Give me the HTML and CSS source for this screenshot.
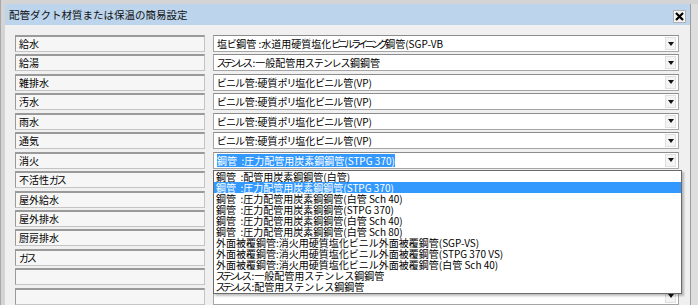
FILE: index.html
```html
<!DOCTYPE html>
<html lang="ja">
<head>
<meta charset="utf-8">
<link rel="stylesheet" href="styles.css">
</head>
<body>
<div class="window">
  <div class="frame">
    <div class="titlebar">
      <span class="title">配管ダクト材質または保温の簡易設定</span>
      <span class="close"><svg width="9" height="9" viewBox="0 0 9 9"><path d="M1 1 L8 8 M8 1 L1 8" stroke="#000" stroke-width="2.2" fill="none"/></svg></span>
    </div>
    <div class="content">
      <div class="rows">
        <div class="row"><div class="label">給水</div><div class="combo"><span class="val">塩ビ鋼管 :水道用硬質塩化<span class="k2">ビニルライニング</span>鋼管(SGP-VB</span><span class="btn"></span></div></div>
        <div class="row"><div class="label">給湯</div><div class="combo"><span class="val"><span class="k2">ステンレス</span> :一般配管用ステンレス鋼鋼管</span><span class="btn"></span></div></div>
        <div class="row"><div class="label">雑排水</div><div class="combo"><span class="val">ビニル管:硬質ポリ塩化ビニル管(VP)</span><span class="btn"></span></div></div>
        <div class="row"><div class="label">汚水</div><div class="combo"><span class="val">ビニル管:硬質ポリ塩化ビニル管(VP)</span><span class="btn"></span></div></div>
        <div class="row"><div class="label">雨水</div><div class="combo"><span class="val">ビニル管:硬質ポリ塩化ビニル管(VP)</span><span class="btn"></span></div></div>
        <div class="row"><div class="label">通気</div><div class="combo"><span class="val">ビニル管:硬質ポリ塩化ビニル管(VP)</span><span class="btn"></span></div></div>
        <div class="row open"><div class="label">消火</div><div class="combo"><span class="val sel">鋼管  :圧力配管用炭素鋼鋼管(STPG 370)</span><span class="btn"></span></div>
          <ul class="list">
            <li>鋼管  :配管用炭素鋼鋼管(白管)</li>
            <li class="hl">鋼管  :圧力配管用炭素鋼鋼管(STPG 370)</li>
            <li>鋼管  :圧力配管用炭素鋼鋼管(白管 Sch 40)</li>
            <li>鋼管  :圧力配管用炭素鋼鋼管(STPG 370)</li>
            <li>鋼管  :圧力配管用炭素鋼鋼管(白管 Sch 40)</li>
            <li>鋼管  :圧力配管用炭素鋼鋼管(白管 Sch 80)</li>
            <li>外面被覆鋼管:消火用硬質塩化ビニル外面被覆鋼管(SGP-VS)</li>
            <li>外面被覆鋼管:消火用硬質塩化ビニル外面被覆鋼管(STPG 370 VS)</li>
            <li>外面被覆鋼管:消火用硬質塩化ビニル外面被覆鋼管(白管 Sch 40)</li>
            <li><span class="k2">ステンレス</span> :一般配管用ステンレス鋼鋼管</li>
            <li><span class="k2">ステンレス</span> :配管用ステンレス鋼鋼管</li>
          </ul>
        </div>
        <div class="row"><div class="label">不活性<span class="k">ガス</span></div><div class="combo"><span class="val"></span><span class="btn"></span></div></div>
        <div class="row"><div class="label">屋外給水</div><div class="combo"><span class="val"></span><span class="btn"></span></div></div>
        <div class="row"><div class="label">屋外排水</div><div class="combo"><span class="val"></span><span class="btn"></span></div></div>
        <div class="row"><div class="label">厨房排水</div><div class="combo"><span class="val"></span><span class="btn"></span></div></div>
        <div class="row"><div class="label"><span class="k">ガス</span></div><div class="combo"><span class="val"></span><span class="btn"></span></div></div>
        <div class="row"><div class="label"></div><div class="combo"><span class="val"></span><span class="btn"></span></div></div>
        <div class="row"><div class="label"></div><div class="combo"><span class="val"></span><span class="btn"></span></div></div>
      </div>
    </div>
  </div>
  <div class="rightstrip"></div>
</div>
</body>
</html>
```

FILE: styles.css
```css
html, body {
  margin: 0;
  padding: 0;
  background: #d9d9d9;
}
body {
  font-family: "Noto Sans CJK JP", "Noto Sans", sans-serif;
  color: #000;
  overflow: hidden;
}
.window {
  width: 698px;
  height: 305px;
  display: flex;
  background: #d4d4d4;
  box-sizing: border-box;
  padding-top: 4px;
  padding-left: 4px;
  border-left: 1px solid #a8a8a8;
}
.frame {
  flex: 1;
  display: flex;
  flex-direction: column;
  background: #f0f0f0;
}
.rightstrip {
  width: 7px;
  border-left: 1px solid #9c9c9c;
  background: #dedede;
}
.titlebar {
  height: 21px;
  background: #bcd4ec;
  display: flex;
  align-items: center;
  justify-content: space-between;
  padding: 0 4px 0 4px;
  flex: none;
}
.title {
  font-size: 10.5px;
  line-height: 21px;
  color: #111;
}
.close {
  width: 13px;
  height: 13px;
  margin-top: 4px;
  border: 1px solid #b0b0b0;
  box-sizing: border-box;
  background: #f3f3f3;
  display: flex;
  align-items: center;
  justify-content: center;
}
.content {
  padding: 10px 0 0 10px;
  flex: 1;
}
.rows {
  display: flex;
  flex-direction: column;
  gap: 2.45px;
}
.row {
  display: flex;
  gap: 8px;
  height: 17px;
  position: relative;
}
.label {
  width: 190px;
  height: 17px;
  box-sizing: border-box;
  border-top: 2px solid #9a9a9a;
  border-left: 1px solid #9a9a9a;
  border-bottom: 1px solid #c4c4c4;
  border-right: 1px solid #c4c4c4;
  background: #f6f6f6;
  font-size: 10px;
  line-height: 13px;
  padding-left: 3px;
  white-space: nowrap;
}
.combo {
  width: 466px;
  height: 17px;
  box-sizing: border-box;
  border: 1px solid #a5a5a5;
  border-top-color: #8c8c8c;
  background: #fff;
  display: flex;
  align-items: center;
  justify-content: space-between;
  padding-left: 3px;
}
.val {
  font-size: 10px;
  line-height: 13px;
  white-space: pre;
  font-feature-settings: "palt";
}
.k {
  font-feature-settings: "palt";
  letter-spacing: -1.3px;
}
.k2 {
  font-feature-settings: "palt";
  letter-spacing: -2.3px;
}
.val.sel {
  background: #3399ff;
  color: #fff;
}
.btn {
  width: 11px;
  height: 13px;
  margin-right: 2px;
  background: #f4f4f4;
  border: 1px solid #e0e0e0;
  box-sizing: border-box;
  display: flex;
  align-items: center;
  justify-content: center;
}
.btn::after {
  content: "";
  border-left: 3px solid transparent;
  border-right: 3px solid transparent;
  border-top: 4px solid #111;
}
.list {
  position: absolute;
  top: 18px;
  left: 198px;
  width: 469px;
  height: 124px;
  margin: 0;
  padding: 0;
  list-style: none;
  background: #fff;
  border: 1px solid #6a6a6a;
  box-sizing: border-box;
  box-shadow: 2px 2px 2px rgba(0,0,0,0.25);
  z-index: 5;
}
.list li {
  height: 11px;
  font-size: 10px;
  line-height: 11px;
  padding-left: 2px;
  white-space: pre;
}
.list li.hl {
  background: #3399ff;
  color: #fff;
}
```
